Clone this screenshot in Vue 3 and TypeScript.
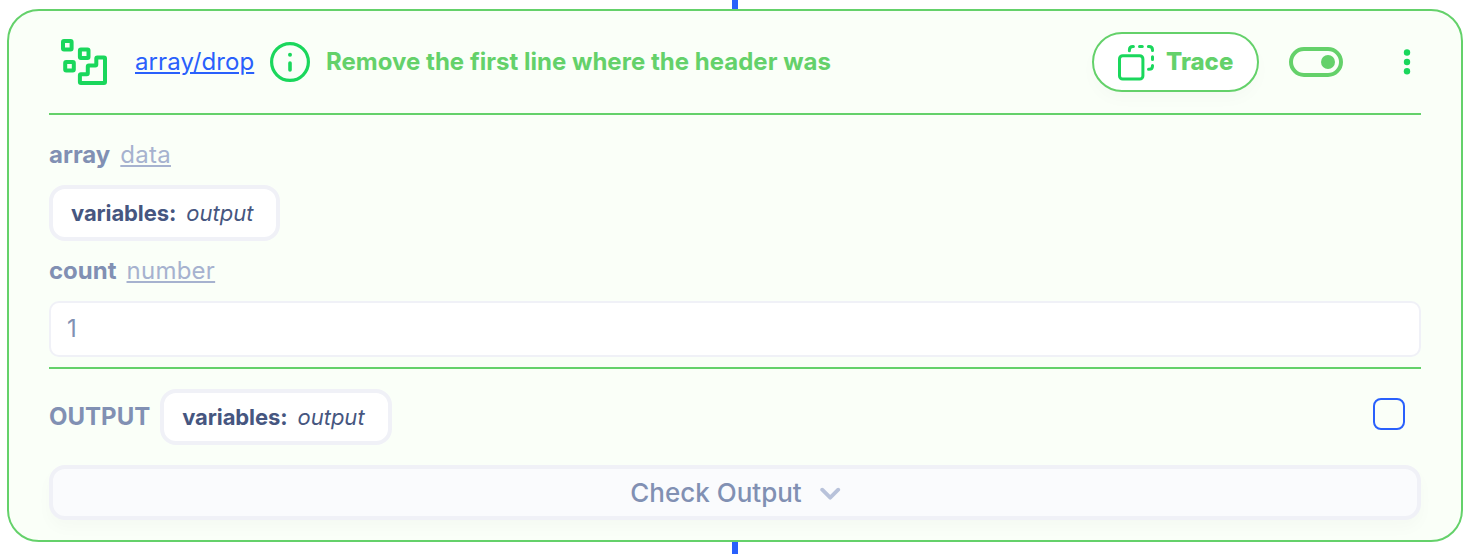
<script setup lang="ts">
import { ref } from 'vue'

const enabled = ref(true)
const selected = ref(false)
const count = ref('1')
const dots = [9.5, 19, 28.2]
</script>

<template>
  <main class="flow">
    <div class="connector top"></div>
    <section class="card">
      <header class="header">
        <svg class="step-icon" width="50" height="50" viewBox="0 0 50 50" fill="none" stroke="#1ad75c" stroke-width="4" stroke-linejoin="round">
          <rect x="4" y="4" width="8.6" height="8.6" rx="1" />
          <rect x="20.9" y="12.4" width="8.6" height="8.6" rx="1" />
          <rect x="6.2" y="24.9" width="8.6" height="8.6" rx="1" />
          <path d="M20.9 45V38.3Q20.9 37.3 21.9 37.3H27.8Q28.8 37.3 28.8 36.3V29.4Q28.8 28.4 29.8 28.4H36.3Q37.3 28.4 37.3 27.4V21.4Q37.3 20.4 38.3 20.4H45Q46 20.4 46 21.4V45Q46 46 45 46H21.9Q20.9 46 20.9 45Z" />
        </svg>
        <a class="name">array/drop</a>
        <svg class="info" width="40" height="40" viewBox="0 0 40 40" fill="none" stroke="#1ad75c">
          <circle cx="20" cy="20" r="18.4" stroke-width="3.2" />
          <path d="M20 21.5V28.5" stroke-width="3.6" stroke-linecap="round" transform="translate(0 -.5)" />
          <circle cx="20" cy="12.7" r="2" fill="#1ad75c" stroke="none" />
        </svg>
        <span class="title">Remove the first line where the header was</span>
        <button class="trace">
          <svg width="38" height="38" viewBox="0 0 38 38" fill="none" stroke="#1ad75c" stroke-width="3" stroke-linecap="round">
            <rect x="2.5" y="12.7" width="23.4" height="23.4" rx="3.2" />
            <path d="M12.4 7.8V7Q12.4 3.5 15.9 3.5H16.4M22.5 3.5H25.3M31.4 3.5H32Q35.5 3.5 35.5 7V7.6M35.5 13.7V16.4M35.5 22.4V22.9Q35.5 26.3 32 26.3H31.5" />
          </svg>
          <span>Trace</span>
        </button>
        <button class="toggle" :class="{ on: enabled }" @click="enabled = !enabled"><i></i></button>
        <svg class="menu" width="8" height="40" viewBox="0 0 8 40" fill="#1ad75c">
          <circle v-for="y in dots" :key="y" cx="4" :cy="y + 1" r="3.2" />
        </svg>
      </header>

      <div class="fields">
        <div class="label"><b>array</b><a>data</a></div>
        <div class="chip"><b>variables:</b><em>output</em></div>
        <div class="label second"><b>count</b><a>number</a></div>
        <input v-model="count" class="input" />
      </div>

      <div class="output-row">
        <b class="output-label">OUTPUT</b>
        <div class="chip"><b>variables:</b><em>output</em></div>
        <button class="check" @click="selected = !selected"></button>
      </div>

      <button class="expand">
        <span>Check Output</span>
        <svg width="22" height="14" viewBox="0 0 22 14" fill="none" stroke="#b8c2da" stroke-width="3.8" stroke-linecap="round" stroke-linejoin="round">
          <path d="M3.2 3.7L11.2 11.7L19.2 3.7" />
        </svg>
      </button>
    </section>
    <div class="connector bottom"></div>
  </main>
</template>

<style>
body {
  margin: 0;
  background: #fff;
  overflow: hidden;
}
</style>

<style scoped>
.flow {
  width: 1471px;
  height: 554px;
  display: flex;
  flex-direction: column;
  font-family: Inter, "Liberation Sans", sans-serif;
  font-size: 24px;
  line-height: 30px;
  color: #8190b3;
}
.flow * { box-sizing: border-box; }
button, input { font: inherit; margin: 0; padding: 0; }
.connector {
  width: 6px;
  margin-left: 732px;
  background: #2960fc;
  box-shadow: 0 0 48px rgba(60, 60, 220, 0.1);
}
.top { height: 9px; }
.bottom { height: 12px; }
.card {
  width: 1456px;
  height: 533px;
  margin-left: 7px;
  padding: 0 40px;
  border: 2px solid #64d16a;
  border-radius: 32px;
  background: #fafff8;
  position: relative;
}
.header {
  height: 104px;
  display: flex;
  align-items: center;
  border-bottom: 2px solid #64d16a;
}
.step-icon { margin-left: 10px; }
.name {
  margin-left: 26px;
  width: 119px;
  color: #2960fc;
  text-decoration: underline;
  letter-spacing: 0.1px;
  white-space: nowrap;
}
.info { margin-left: 16px; }
.title {
  margin-left: 16px;
  color: #64d16a;
  font-weight: 700;
  letter-spacing: 0.02px;
  white-space: nowrap;
}
.trace {
  margin-left: auto;
  width: 167px;
  height: 60px;
  display: flex;
  align-items: center;
  padding-left: 23px;
  border: 2px solid #64d16a;
  border-radius: 30px;
  background: #fff;
  color: #64d16a;
  font-weight: 800;
  box-shadow: 0 8px 16px rgba(20, 30, 40, 0.02);
}
.trace span { margin-left: 11px; }
.toggle {
  margin-left: 30px;
  width: 54px;
  height: 30px;
  display: flex;
  align-items: center;
  padding: 0 4px;
  border: 4px solid #64d16a;
  border-radius: 15px;
  background: transparent;
}
.toggle.on { justify-content: flex-end; }
.toggle i {
  width: 14px;
  height: 14px;
  border-radius: 50%;
  background: #64d16a;
}
.menu { margin: 0 10px 0 60px; }
.fields {
  height: 254px;
  padding-top: 25px;
  border-bottom: 2px solid #64d16a;
}
.label {
  display: flex;
  gap: 10px;
  height: 30px;
}
.label b, .output-label { font-weight: 700; }
.label a {
  color: #a6b2cf;
  text-decoration: underline;
  letter-spacing: 0.25px;
}
.chip {
  width: 231px;
  height: 56px;
  display: flex;
  align-items: center;
  gap: 10px;
  padding-left: 18px;
  border: 4px solid #f0f1f7;
  border-radius: 16px;
  background: #fff;
  color: #465680;
  font-size: 22px;
  white-space: nowrap;
}
.chip b { letter-spacing: -0.1px; }
.fields .chip { margin-top: 15px; }
.second { margin-top: 15px; }
.input {
  display: block;
  width: 100%;
  height: 56px;
  margin-top: 15px;
  padding: 0 16px 2px;
  border: 2px solid #f0f1f7;
  border-radius: 10px;
  background: #fff;
  color: #8190b3;
  outline: none;
}
.output-row {
  height: 56px;
  margin-top: 20px;
  display: flex;
  align-items: center;
}
.output-row .chip {
  width: 232px;
  margin-left: 10px;
}
.check {
  width: 32px;
  height: 32px;
  margin: 0 16px 6px auto;
  border: 2px solid #2960fc;
  border-radius: 8px;
  background: transparent;
}
.expand {
  width: 100%;
  height: 55px;
  margin-top: 20px;
  display: flex;
  align-items: center;
  justify-content: center;
  gap: 17px;
  padding-left: 1px;
  border: 4px solid #f0f1f7;
  border-radius: 16px;
  background: #fafbfd;
  color: #8190b3;
  font-size: 26px;
  font-weight: 500;
  box-shadow: 0 8px 16px rgba(20, 30, 40, 0.025);
}
</style>
